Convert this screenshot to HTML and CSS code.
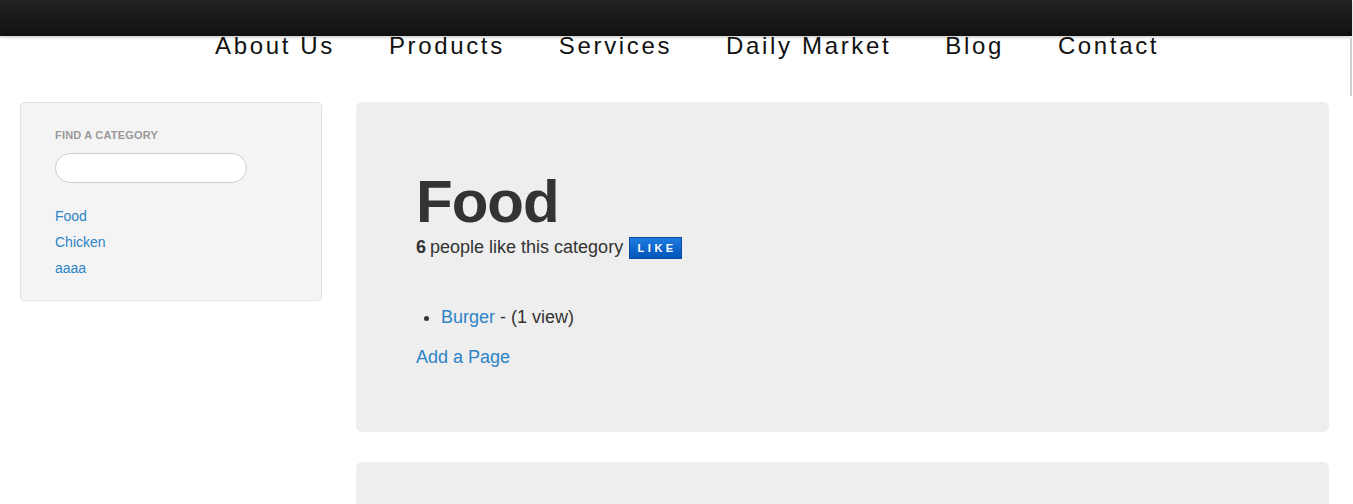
FILE: index.html
```html
<!DOCTYPE html>
<html>
<head>
<meta charset="utf-8">
<link rel="stylesheet" href="styles.css">
</head>
<body>
<div class="topbar"></div>
<div class="scrollmark"></div>
<nav class="menu">
  <a href="#">About Us</a>
  <a href="#">Products</a>
  <a href="#">Services</a>
  <a href="#">Daily Market</a>
  <a href="#">Blog</a>
  <a href="#">Contact</a>
</nav>
<div class="layout">
  <aside class="sidebar">
    <div class="nav-header">Find a Category</div>
    <input class="search" type="text">
    <ul class="cats">
      <li><a href="#">Food</a></li>
      <li><a href="#">Chicken</a></li>
      <li><a href="#">aaaa</a></li>
    </ul>
  </aside>
  <main class="main">
    <section class="hero">
      <h1>Food</h1>
      <p class="likes"><strong>6</strong> people like this category <button class="like">LIKE</button></p>
      <ul class="pages">
        <li><a href="#">Burger</a> - (1 view)</li>
      </ul>
      <a class="add" href="#">Add a Page</a>
    </section>
    <section class="hero next"></section>
  </main>
</div>
</body>
</html>
```
FILE: styles.css
```css
html, body {
  margin: 0;
  padding: 0;
  background: #fff;
  overflow: hidden;
}
body {
  font-family: "Liberation Sans", Arial, sans-serif;
  color: #333;
  font-size: 14px;
}
a { color: #2d84c6; text-decoration: none; }
.topbar {
  height: 36px;
  background: linear-gradient(#222222, #111111);
  box-shadow: 0 1px 3px rgba(0,0,0,0.25);
  margin-right: 1px;
}
.scrollmark {
  position: absolute;
  top: 38px;
  right: 1px;
  width: 2px;
  height: 58px;
  background: #cfcfcf;
}
.menu {
  display: flex;
  gap: 54px;
  padding-left: 215px;
  height: 20px;
  line-height: 20px;
  margin-bottom: 46px;
}
.menu a {
  font-size: 24px;
  letter-spacing: 2.65px;
  color: #111;
}
.layout {
  display: grid;
  grid-template-columns: 302px 1fr;
  gap: 34px;
  padding: 0 24px 0 20px;
}
.sidebar {
  align-self: start;
  background: #f4f4f4;
  border: 1px solid #e3e3e3;
  border-radius: 4px;
  padding: 22px 34px 19px;
}
.nav-header {
  font-size: 11px;
  font-weight: bold;
  text-transform: uppercase;
  color: #999;
  line-height: 20px;
  letter-spacing: 0.2px;
  margin-bottom: 8px;
}
.search {
  display: block;
  box-sizing: border-box;
  width: 192px;
  height: 30px;
  border: 1px solid #ccc;
  border-radius: 15px;
  background: #fff;
  margin: 0 0 20px;
  padding: 4px 14px;
  outline: none;
}
.cats {
  list-style: none;
  margin: 0;
  padding: 0;
}
.cats li {
  line-height: 26px;
  font-size: 14px;
}
.main {
  display: flex;
  flex-direction: column;
  gap: 30px;
}
.hero {
  background: #eeeeee;
  border-radius: 6px;
  padding: 60px;
}
.hero h1 {
  margin: 10px 0 0;
  font-size: 60px;
  line-height: 60px;
  font-weight: bold;
  letter-spacing: -1px;
  color: #333;
}
.likes {
  margin: 0;
  font-size: 18px;
  line-height: 30px;
  display: flex;
  align-items: center;
  gap: 5px;
}
.likes strong { margin-right: -1px; }
.like {
  height: 22px;
  width: 53px;
  padding: 0 0 0 3px;
  border: 1px solid #0a4ea8;
  background: linear-gradient(#1f7be0, #0055bb);
  color: #fff;
  font-family: "Liberation Sans", Arial, sans-serif;
  font-weight: bold;
  font-size: 11px;
  letter-spacing: 3.5px;
  margin: 2px 0 0 1px;
}
.pages {
  margin: 40px 0 10px;
  padding-left: 25px;
  font-size: 18px;
  line-height: 30px;
}
.add {
  display: block;
  font-size: 18px;
  line-height: 30px;
}
.next {
  height: 60px;
}
```
